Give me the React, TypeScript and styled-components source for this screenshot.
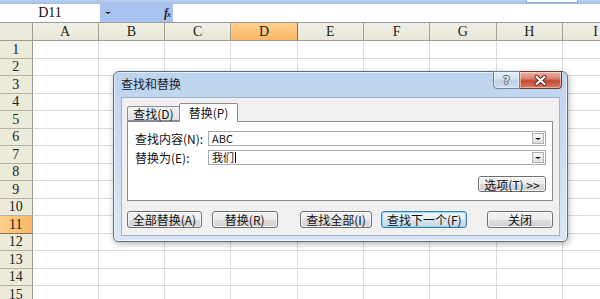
import React from "react";
import styled, { createGlobalStyle } from "styled-components";

const GlobalStyle = createGlobalStyle`
  html, body { margin: 0; padding: 0; background: #fff; }
  body { overflow: hidden; }
  #root { width: 600px; height: 299px; }
`;

const COLS = ["A", "B", "C", "D", "E", "F", "G", "H", "I"];
const ROWS = Array.from({ length: 15 }, (_, i) => i + 1);
const ACTIVE_COL = "D";
const ACTIVE_ROW = 11;

const Screen = styled.div`
  position: relative;
  width: 600px;
  height: 299px;
  overflow: hidden;
  background: #fff;
  font-family: "Liberation Serif", "Noto Sans CJK SC", serif;
`;

const TopBand = styled.div`
  height: 4px;
  background: linear-gradient(#b9cff0, #a2bee8);
  display: flex;
  justify-content: flex-end;
  padding-right: 22px;
`;

const SearchStub = styled.div`
  width: 50px;
  height: 2px;
  background: #fff;
  border: 1px solid #8eaad6;
  border-top: none;
`;

const FormulaBar = styled.div`
  display: flex;
  height: 18px;
  border-bottom: 1px solid #9a9a9a;
`;

const NameBox = styled.div`
  width: 100px;
  display: flex;
  align-items: center;
  justify-content: center;
  font-size: 14px;
  color: #111;
  background: #fff;
`;

const BarTools = styled.div`
  width: 73px;
  box-sizing: border-box;
  background: #a8c3ef;
  display: flex;
  align-items: center;
  justify-content: space-between;
  padding: 0 3px 0 5px;
`;

const DownArrow = styled.span<{ $size?: number }>`
  width: 0;
  height: 0;
  border-left: ${(p) => p.$size ?? 3}px solid transparent;
  border-right: ${(p) => p.$size ?? 3}px solid transparent;
  border-top: ${(p) => (p.$size ?? 3) - 0.5}px solid #111;
`;

const FxLabel = styled.span`
  font-family: "Liberation Serif", serif;
  font-style: italic;
  font-weight: bold;
  font-size: 12px;
  color: #222;
  letter-spacing: -1px;
  & small {
    font-size: 8px;
  }
`;

const FormulaInput = styled.div`
  flex: 1;
  background: #fff;
`;

const Sheet = styled.div`
  display: grid;
  grid-template-columns: 32.5px repeat(9, 66.3px);
  grid-template-rows: 18px repeat(15, 17.5px);
`;

const Corner = styled.div`
  box-sizing: border-box;
  background: #eceadc;
  border-right: 1px solid #9e9c8f;
  border-bottom: 1px solid #9e9c8f;
`;

const ColHead = styled.div<{ $active?: boolean }>`
  box-sizing: border-box;
  display: flex;
  align-items: center;
  justify-content: center;
  font-size: 14px;
  color: #222;
  background: ${(p) =>
    p.$active ? "linear-gradient(#ffcf8c, #fbb765)" : "linear-gradient(#f1efe5, #e8e6d8)"};
  border-right: 1px solid ${(p) => (p.$active ? "#7e6f63" : "#a4a296")};
  border-bottom: 1px solid #9e9c8f;
`;

const RowHead = styled.div<{ $active?: boolean }>`
  box-sizing: border-box;
  display: flex;
  align-items: center;
  justify-content: center;
  font-size: 14px;
  line-height: 14px;
  padding-top: 1px;
  color: #222;
  background: ${(p) => (p.$active ? "linear-gradient(90deg, #ffcf8c, #fbb765)" : "#ecead9")};
  border-right: 1px solid #9e9c8f;
  border-bottom: 1px solid ${(p) => (p.$active ? "#7e6f63" : "#b4b2a4")};
`;

const Cell = styled.div`
  box-sizing: border-box;
  background: #fff;
  border-right: 1px solid #dadada;
  border-bottom: 1px solid #dadada;
`;

/* ---------- Dialog ---------- */

const Dialog = styled.div`
  position: absolute;
  left: 113px;
  top: 71px;
  width: 455px;
  height: 171px;
  box-sizing: border-box;
  border: 1px solid #5c6d86;
  border-radius: 6px 6px 5px 5px;
  background: linear-gradient(#bcd3ee, #cadcf2 45%, #d8e5f6);
  box-shadow: inset 0 0 0 1px rgba(255, 255, 255, 0.6), 1px 2px 6px rgba(0, 0, 0, 0.3);
  display: flex;
  flex-direction: column;
  padding: 0 7px 5px 7px;
  font-family: "Noto Sans CJK SC", "Noto Sans", sans-serif;
  font-size: 12px;
  color: #111;
`;

const TitleBar = styled.div`
  height: 25px;
  display: flex;
  align-items: flex-start;
`;

const Title = styled.div`
  margin-top: 4px;
  line-height: 16px;
  font-size: 12px;
  color: #1a1a1a;
`;

const CaptionButtons = styled.div`
  margin-left: auto;
  margin-right: -2px;
  margin-top: -1px;
  display: flex;
`;

const CaptionBtn = styled.div<{ $kind: "help" | "close" }>`
  box-sizing: border-box;
  height: 18px;
  width: ${(p) => (p.$kind === "close" ? 42 : 27)}px;
  display: flex;
  align-items: center;
  justify-content: center;
  border: 1px solid ${(p) => (p.$kind === "close" ? "#6d3a33" : "#6f819c")};
  border-left-width: ${(p) => (p.$kind === "close" ? 0 : 1)}px;
  border-radius: ${(p) => (p.$kind === "close" ? "0 0 4px 0" : "0 0 0 4px")};
  background: ${(p) =>
    p.$kind === "close"
      ? "linear-gradient(#eab1a3, #d98572 40%, #c84a35 55%, #d77a60)"
      : "linear-gradient(#e6eef8, #d4e0ef 45%, #bfd0e6 55%, #cfdcee)"};
  box-shadow: inset 0 0 0 1px rgba(255, 255, 255, 0.45);
  color: #e8eef6;
  font-family: "DejaVu Sans", sans-serif;
  font-weight: bold;
  font-size: 11px;
  text-shadow: -1px 0 #556379, 1px 0 #556379, 0 -1px #556379, 0 1px #556379;
`;

const CloseGlyph = () => (
  <svg width="13" height="11" viewBox="0 0 13 11">
    <path d="M2.5 2 L10.5 9 M10.5 2 L2.5 9" stroke="#5a2a22" strokeWidth="4" strokeLinecap="round" />
    <path d="M2.5 2 L10.5 9 M10.5 2 L2.5 9" stroke="#fff" strokeWidth="2.2" strokeLinecap="round" />
  </svg>
);

const Client = styled.div`
  flex: 1;
  background: #f0f0f0;
  border: 1px solid #9fb3cc;
  display: flex;
  flex-direction: column;
  padding: 5px 6px 0 5px;
`;

const TabStrip = styled.div`
  height: 18px;
  display: flex;
  align-items: flex-end;
`;

const Tab = styled.div<{ $active?: boolean; $w: number }>`
  position: relative;
  z-index: ${(p) => (p.$active ? 1 : 0)};
  box-sizing: border-box;
  width: ${(p) => p.$w}px;
  height: ${(p) => (p.$active ? 19 : 15)}px;
  margin-bottom: ${(p) => (p.$active ? -1 : 0)}px;
  margin-left: ${(p) => (p.$active ? -1 : 0)}px;
  display: flex;
  align-items: center;
  justify-content: center;
  padding-bottom: ${(p) => (p.$active ? 2 : 0)}px;
  border: 1px solid #898c95;
  border-bottom: ${(p) => (p.$active ? "none" : "1px solid #898c95")};
  border-radius: 2px 2px 0 0;
  background: ${(p) => (p.$active ? "#fff" : "linear-gradient(#f3f3f3, #e4e4e4)")};
  font-size: 12px;
`;

const Panel = styled.div`
  box-sizing: border-box;
  height: 80px;
  background: #fff;
  border: 1px solid #898c95;
  padding: 9px 6px 0 7px;
  display: flex;
  flex-direction: column;
  gap: 4px;
`;

const FieldRow = styled.div`
  display: flex;
  align-items: center;
  height: 15px;
`;

const Label = styled.div`
  width: 73px;
  font-size: 12px;
  white-space: nowrap;
`;

const Combo = styled.div`
  flex: 1;
  box-sizing: border-box;
  height: 15px;
  border: 1px solid #a5a9b1;
  background: #fff;
  display: flex;
  align-items: center;
  padding-left: 3px;
`;

const ComboText = styled.div`
  flex: 1;
  font-size: 11px;
  line-height: 13px;
  display: flex;
  align-items: center;
`;

const Caret = styled.span`
  display: inline-block;
  width: 1px;
  height: 11px;
  background: #000;
  margin-left: 1px;
`;

const ComboButton = styled.div`
  box-sizing: border-box;
  width: 12px;
  height: 11px;
  margin-right: 1px;
  border: 1px solid #b0b0b0;
  background: linear-gradient(#f7f7f7, #dedede);
  display: flex;
  align-items: center;
  justify-content: center;
`;

const OptionsRow = styled.div`
  display: flex;
  justify-content: flex-end;
  margin-top: 7px;
`;

const Button = styled.div<{ $w: number; $ml: number; $focused?: boolean; $h?: number }>`
  box-sizing: border-box;
  width: ${(p) => p.$w}px;
  height: ${(p) => p.$h ?? 17}px;
  margin-left: ${(p) => p.$ml}px;
  display: flex;
  align-items: center;
  justify-content: center;
  white-space: nowrap;
  font-size: 12px;
  color: #111;
  border: 1px solid ${(p) => (p.$focused ? "#3c7fb1" : "#707070")};
  border-radius: 3px;
  background: ${(p) =>
    p.$focused
      ? "linear-gradient(#f1f6fa, #e6eef5 50%, #d6e3ee 51%, #cbdae7)"
      : "linear-gradient(#f4f4f4, #ebebeb 50%, #dddddd 51%, #d0d0d0)"};
  box-shadow: inset 0 0 0 1px ${(p) => (p.$focused ? "rgba(120, 210, 245, 0.8)" : "rgba(255,255,255,0.7)")};
`;

const ButtonRow = styled.div`
  display: flex;
  margin-top: 10px;
`;

export default function App() {
  return (
    <Screen>
      <GlobalStyle />
      <TopBand>
        <SearchStub />
      </TopBand>
      <FormulaBar>
        <NameBox>D11</NameBox>
        <BarTools>
          <DownArrow $size={3} />
          <FxLabel>
            f<small>x</small>
          </FxLabel>
        </BarTools>
        <FormulaInput />
      </FormulaBar>
      <Sheet>
        <Corner />
        {COLS.map((c) => (
          <ColHead key={c} $active={c === ACTIVE_COL}>
            {c}
          </ColHead>
        ))}
        {ROWS.map((r) => (
          <React.Fragment key={r}>
            <RowHead $active={r === ACTIVE_ROW}>{r}</RowHead>
            {COLS.map((c) => (
              <Cell key={c} />
            ))}
          </React.Fragment>
        ))}
      </Sheet>

      <Dialog>
        <TitleBar>
          <Title>查找和替换</Title>
          <CaptionButtons>
            <CaptionBtn $kind="help">?</CaptionBtn>
            <CaptionBtn $kind="close">
              <CloseGlyph />
            </CaptionBtn>
          </CaptionButtons>
        </TitleBar>
        <Client>
          <TabStrip>
            <Tab $w={53}>查找(D)</Tab>
            <Tab $w={59} $active>
              替换(P)
            </Tab>
          </TabStrip>
          <Panel>
            <FieldRow>
              <Label>查找内容(N):</Label>
              <Combo>
                <ComboText>ABC</ComboText>
                <ComboButton>
                  <DownArrow $size={3} />
                </ComboButton>
              </Combo>
            </FieldRow>
            <FieldRow>
              <Label>替换为(E):</Label>
              <Combo>
                <ComboText>
                  我们
                  <Caret />
                </ComboText>
                <ComboButton>
                  <DownArrow $size={3} />
                </ComboButton>
              </Combo>
            </FieldRow>
            <OptionsRow>
              <Button $w={68} $ml={0} $h={16}>
                选项(T) &gt;&gt;
              </Button>
            </OptionsRow>
          </Panel>
          <ButtonRow>
            <Button $w={75} $ml={0}>全部替换(A)</Button>
            <Button $w={66} $ml={10}>替换(R)</Button>
            <Button $w={73} $ml={22}>查找全部(I)</Button>
            <Button $w={86} $ml={9} $focused>
              查找下一个(F)
            </Button>
            <Button $w={66} $ml={20}>关闭</Button>
          </ButtonRow>
        </Client>
      </Dialog>
    </Screen>
  );
}
